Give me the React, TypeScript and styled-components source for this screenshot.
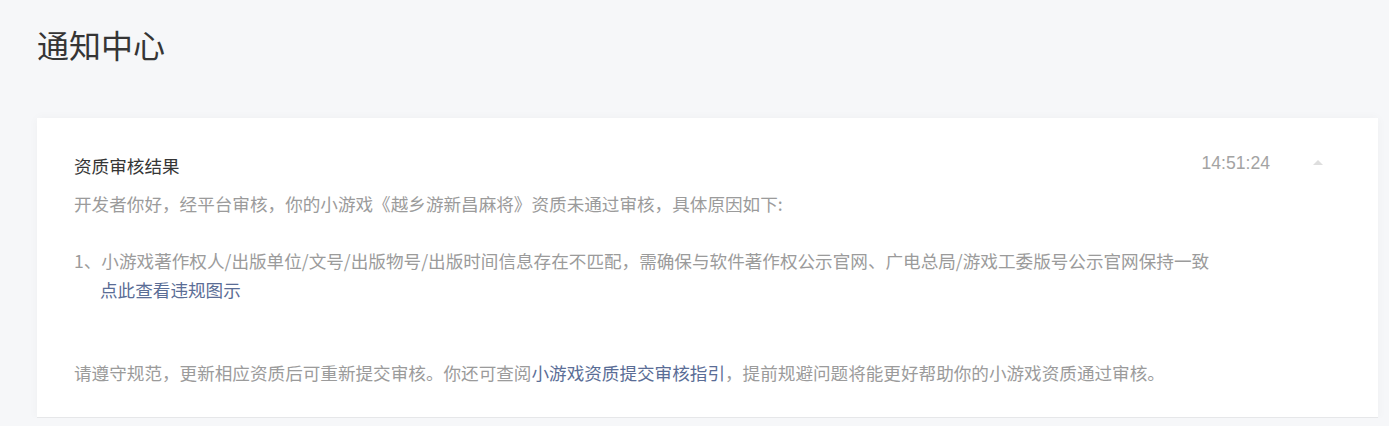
import React from "react";
import styled, { createGlobalStyle } from "styled-components";

const Global = createGlobalStyle`
  html, body { margin: 0; padding: 0; }
  body {
    background: #f6f7f9;
    font-family: "Noto Sans CJK SC", "Noto Sans", sans-serif;
  }
`;

const Page = styled.div`
  padding: 28px 11px 0 37px;
`;

const Title = styled.h1`
  margin: 0;
  font-size: 32px;
  line-height: 32px;
  font-weight: 400;
  color: #353535;
`;

const Card = styled.section`
  margin-top: 58px;
  background: #fff;
  border-bottom: 1px solid #e6e7e9;
  box-shadow: 0 0 10px rgba(0, 0, 0, 0.035);
  padding: 33px 55px 29px 37px;
`;

const HeaderRow = styled.div`
  display: flex;
  align-items: center;
  height: 29px;
  margin-bottom: 10px;
`;

const Heading = styled.div`
  flex: 1;
  font-size: 17.6px;
  line-height: 29px;
  color: #353535;
`;

const Time = styled.span`
  font-family: "Liberation Sans", Arial, sans-serif;
  font-size: 17.6px;
  color: #a3a3a3;
  margin-right: 43px;
  position: relative;
  top: -2px;
`;

const Caret = styled.span`
  width: 0;
  height: 0;
  border-left: 5px solid transparent;
  border-right: 5px solid transparent;
  border-bottom: 5px solid #dedede;
  position: relative;
  top: -3px;
`;

const Body = styled.div`
  font-size: 17.6px;
  line-height: 28.5px;
  color: #9b9b9b;
`;

const Para = styled.p<{ $gap?: number; $indent?: number }>`
  margin: ${(p) => p.$gap ?? 0}px 0 0 0;
  padding-left: ${(p) => p.$indent ?? 0}px;
`;

const Link = styled.a`
  color: #5a6d96;
  text-decoration: none;
  cursor: pointer;
`;

export default function App() {
  return (
    <>
      <Global />
      <Page>
        <Title>通知中心</Title>
        <Card>
          <HeaderRow>
            <Heading>资质审核结果</Heading>
            <Time>14:51:24</Time>
            <Caret />
          </HeaderRow>
          <Body>
            <Para>
              开发者你好，经平台审核，你的小游戏《越乡游新昌麻将》资质未通过审核，具体原因如下:
            </Para>
            <Para $gap={28.5}>
              1、小游戏著作权人/出版单位/文号/出版物号/出版时间信息存在不匹配，需确保与软件著作权公示官网、广电总局/游戏工委版号公示官网保持一致
            </Para>
            <Para $indent={26}>
              <Link>点此查看违规图示</Link>
            </Para>
            <Para $gap={55}>
              请遵守规范，更新相应资质后可重新提交审核。你还可查阅
              <Link>小游戏资质提交审核指引</Link>
              ，提前规避问题将能更好帮助你的小游戏资质通过审核。
            </Para>
          </Body>
        </Card>
      </Page>
    </>
  );
}
